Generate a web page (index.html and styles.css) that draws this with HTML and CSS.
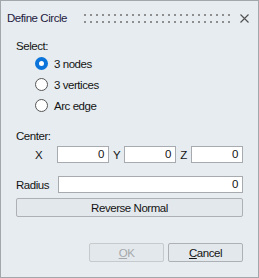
FILE: index.html
```html
<!DOCTYPE html>
<html>
<head>
  <title>Define Circle</title>
  <link rel="stylesheet" href="styles.css">
</head>
<body>
  <div class="dialog">
    <div class="titlebar">
      <span class="title">Define Circle</span>
      <span class="grip"></span>
      <svg class="close" width="9" height="9" viewBox="0 0 9 9">
        <path d="M0.5 0.5 L8.5 8.5 M8.5 0.5 L0.5 8.5" stroke="#505050" stroke-width="1.1" fill="none"/>
      </svg>
    </div>

    <div class="content">
      <div class="label">Select:</div>
      <div class="radios">
        <label class="radio"><span class="dot checked"></span>3 nodes</label>
        <label class="radio"><span class="dot"></span>3 vertices</label>
        <label class="radio"><span class="dot"></span>Arc edge</label>
      </div>

      <div class="label center">Center:</div>
      <div class="xyz">
        <span class="axis">X</span>
        <div class="field">0</div>
        <span class="axis mid">Y</span>
        <div class="field">0</div>
        <span class="axis mid">Z</span>
        <div class="field">0</div>
      </div>

      <div class="radius">
        <span class="radiusLabel">Radius</span>
        <div class="field">0</div>
      </div>

      <button class="btn wide">Reverse Normal</button>

      <div class="footer">
        <button class="btn disabled"><u>O</u>K</button>
        <button class="btn"><u>C</u>ancel</button>
      </div>
    </div>
  </div>
</body>
</html>
```

FILE: styles.css
```css
body {
  margin: 0;
  font-family: "Liberation Sans", Arial, sans-serif;
  font-size: 11.5px;
  letter-spacing: -0.45px;
  color: #141414;
}

.dialog {
  width: 259px;
  height: 278px;
  box-sizing: border-box;
  border: 1px solid #a2a7ab;
  background-color: #e6ecf0;
}

.titlebar {
  height: 34px;
  display: flex;
  align-items: center;
  padding: 0 9px 0 6px;
}

.title {
  color: #1e2040;
}

.grip {
  flex: 1;
  height: 9px;
  margin: 0 10px 0 17px;
  background-image: conic-gradient(at 2px 2px, transparent 75%, #8e8e8e 0);
  background-size: 6px 7px;
}

.close {
  margin-top: 1px;
}

.content {
  padding: 4px 15px 0 15px;
}

.label {
  height: 14px;
  line-height: 14px;
}

.radios {
  padding-left: 19px;
}

.radio {
  display: flex;
  align-items: center;
  height: 21px;
}

.dot {
  width: 11px;
  height: 11px;
  border: 1px solid #555;
  border-radius: 50%;
  background-color: white;
  margin-right: 6px;
  box-sizing: content-box;
}

.dot.checked {
  width: 5px;
  height: 5px;
  border: 4px solid #0a74da;
}

.center {
  margin-top: 13px;
}

.xyz {
  display: grid;
  grid-template-columns: 22px 52px 15px 52px 15px 52px;
  align-items: center;
  margin-top: 3px;
  padding-left: 19px;
}

.axis.mid {
  text-align: center;
}

.field {
  height: 17px;
  box-sizing: border-box;
  border: 1px solid #a7abb0;
  background-color: white;
  text-align: right;
  padding-right: 4px;
  line-height: 15px;
}

.radius {
  display: flex;
  align-items: center;
  margin-top: 13px;
}

.radiusLabel {
  width: 42px;
}

.radius .field {
  flex: 1;
}

.btn {
  font-family: inherit;
  font-size: 11.5px;
  letter-spacing: -0.45px;
  color: #141414;
  height: 19px;
  padding: 0;
  border: 1px solid #adb1b5;
  border-radius: 2px;
  background-color: #e3e8ec;
}

.wide {
  display: block;
  width: 227px;
  margin: 5px 0 0 0;
}

.footer {
  display: flex;
  justify-content: flex-end;
  gap: 4px;
  margin-top: 26px;
}

.footer .btn {
  width: 75px;
}

.btn.disabled {
  color: #a6a8aa;
  border-color: #c6cacd;
}
```
